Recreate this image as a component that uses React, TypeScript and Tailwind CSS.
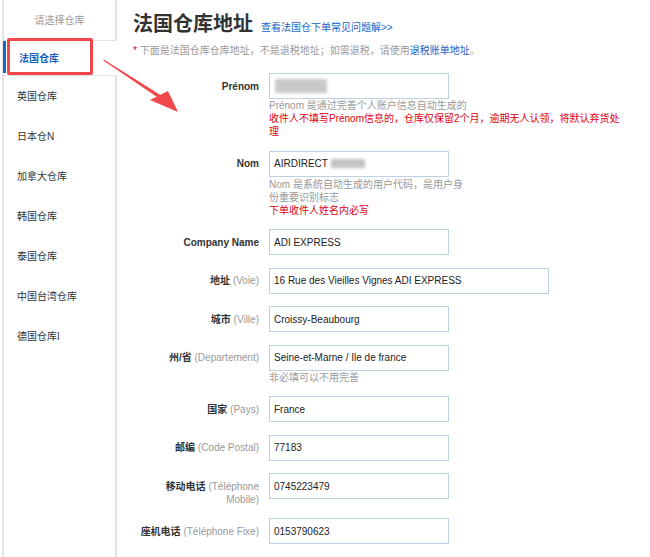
import React from "react";

const items = ["英国仓库", "日本仓N", "加拿大仓库", "韩国仓库", "泰国仓库", "中国台湾仓库", "德国仓库I"];

function Field({
  label,
  sub,
  value,
  wide,
  children,
  blur,
}: {
  label: React.ReactNode;
  sub?: React.ReactNode;
  value?: string;
  wide?: boolean;
  children?: React.ReactNode;
  blur?: "full" | "tail";
}) {
  return (
    <div className="flex items-start">
      <div className="w-[126px] pt-[6.5px] text-right leading-[13px] text-[10px]">
        <span className="font-bold text-[#333]">{label}</span>
        {sub ? <span className="text-[#999]"> {sub}</span> : null}
      </div>
      <div className="ml-[10px]">
        <div
          className={`flex h-[26px] items-center border border-[#bcd0e6] bg-white pl-[4px] text-[10px] text-[#222] ${
            wide ? "w-[280px]" : "w-[180px]"
          }`}
        >
          {blur === "full" ? (
            <div className="ml-[1px] h-[14px] w-[52px] bg-[#c9c9c9] blur-[1.5px]" />
          ) : (
            <>
              <span>{value}</span>
              {blur === "tail" ? <div className="ml-[3px] h-[9px] w-[34px] bg-[#c4c4c4] blur-[1.5px]" /> : null}
            </>
          )}
        </div>
        {children ? <div className="text-[10px] leading-[13px] whitespace-nowrap">{children}</div> : null}
      </div>
    </div>
  );
}

export default function App() {
  return (
    <div className="relative flex min-h-[557px] w-[650px] overflow-hidden bg-white font-['Liberation_Sans','Noto_Sans_CJK_SC',sans-serif] text-[10px] text-[#333]">
      <aside className="ml-[2px] flex w-[115px] flex-col border-l-2 border-[#e3e3e3]">
        <div className="flex h-[41px] items-center justify-center border-r-2 border-b border-[#e3e3e3] text-[10px] text-[#999]">
          请选择仓库
        </div>
        <div className="relative flex h-[35px] items-center border-b border-[#e3e3e3] pl-[15px] font-bold text-[#1a5fc0]">
          <div className="absolute -left-[1px] top-0 bottom-[2px] w-[3px] bg-[#1b66c9]" />
          <div className="absolute left-[3px] -top-[3px] h-[37px] w-[86px] rounded-[2px] border-[3px] border-[#f1464b]" />
          法国仓库
        </div>
        {items.map((t) => (
          <div key={t} className="flex h-[40px] items-center border-r-2 border-[#e3e3e3] pl-[13px] text-[#333]">
            {t}
          </div>
        ))}
        <div className="flex-1 border-r-2 border-[#e3e3e3]" />
      </aside>

      <main className="flex-1 pl-[16px] pt-[10px]">
        <div className="flex items-baseline">
          <h1 className="font-['Noto_Sans_CJK_SC',sans-serif] text-[20px] font-bold leading-[26px] text-[#333]">法国仓库地址</h1>
          <a className="ml-[8px] text-[10px] text-[#1d5fc4]">查看法国仓下单常见问题解&gt;&gt;</a>
        </div>
        <div className="mt-[8px] leading-[13px] text-[#999]">
          <span className="text-[#d8002a]">*</span> 下面是法国仓库仓库地址，不是退税地址；如需退税，请使用
          <span className="text-[#1d5fc4]">退税账单地址</span>。
        </div>

        <div className="mt-[16px] flex flex-col gap-[12.5px]">
          <Field label="Prénom" blur="full">
            <div className="text-[#999]">Prénom 是通过完善个人账户信息自动生成的</div>
            <div className="text-[#e0000f]">
              收件人不填写Prénom信息的，仓库仅保留2个月，逾期无人认领，将默认弃货处
              <br />理
            </div>
          </Field>
          <Field label="Nom" value="AIRDIRECT" blur="tail">
            <div className="mt-[1px] text-[#999]">
              Nom 是系统自动生成的用户代码，是用户身
              <br />
              份重要识别标志
            </div>
            <div className="text-[#e0000f]">下单收件人姓名内必写</div>
          </Field>
          <Field label="Company Name" value="ADI EXPRESS" />
          <Field label="地址" sub="(Voie)" value="16 Rue des Vieilles Vignes ADI EXPRESS" wide />
          <Field label="城市" sub="(Ville)" value="Croissy-Beaubourg" />
          <Field label="州/省" sub="(Departement)" value="Seine-et-Marne / Ile de france">
            <div className="text-[#999]">非必填可以不用完善</div>
          </Field>
          <Field label="国家" sub="(Pays)" value="France" />
          <Field label="邮编" sub="(Code Postal)" value="77183" />
          <Field
            label="移动电话"
            sub={
              <>
                (Téléphone
                <br />
                Mobile)
              </>
            }
            value="0745223479"
          />
          <Field label="座机电话" sub="(Téléphone Fixe)" value="0153790623" />
        </div>
      </main>

      <svg className="pointer-events-none absolute left-0 top-0" width="650" height="557" viewBox="0 0 650 557">
        <polygon points="103,59 104,61 160,99 162,96" fill="#f2474b" />
        <polygon points="178,112 150,100 168,91" fill="#f2474b" />
      </svg>
    </div>
  );
}
